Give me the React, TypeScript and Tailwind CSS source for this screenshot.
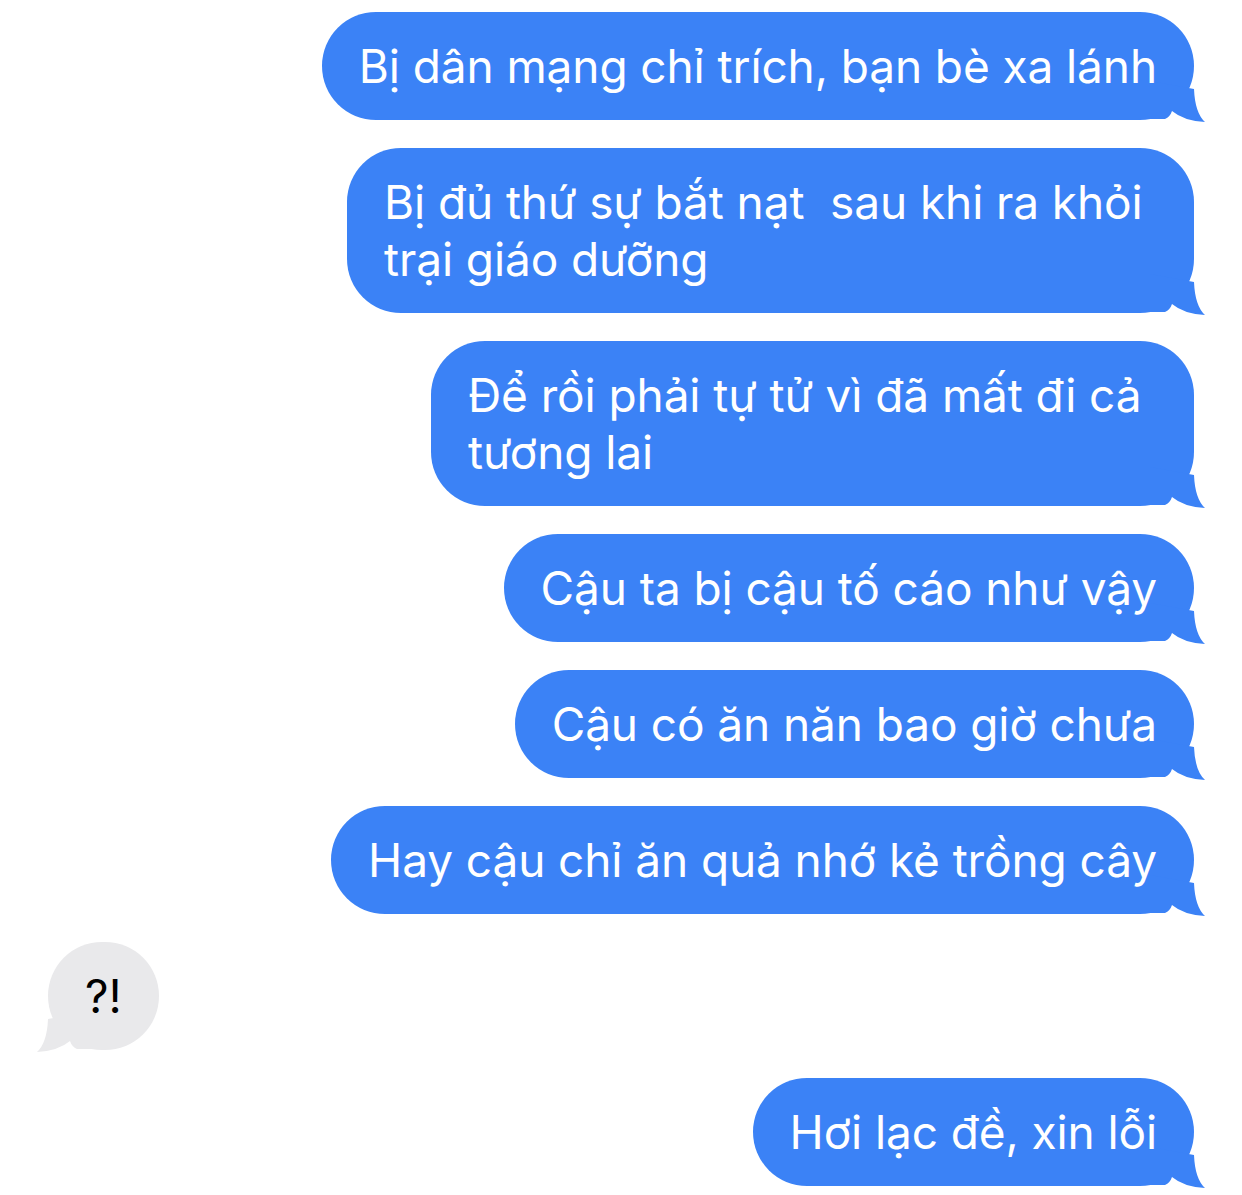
import React from "react";

type Message = {
  from: "me" | "them";
  lines: string[];
  width?: string;
};

const messages: Message[] = [
  { from: "me", lines: ["Bị dân mạng chỉ trích, bạn bè xa lánh"] },
  {
    from: "me",
    lines: ["Bị đủ thứ sự bắt nạt  sau khi ra khỏi", "trại giáo dưỡng"],
    width: "w-[847px]",
  },
  {
    from: "me",
    lines: ["Để rồi phải tự tử vì đã mất đi cả", "tương lai"],
    width: "w-[763px]",
  },
  { from: "me", lines: ["Cậu ta bị cậu tố cáo như vậy"] },
  { from: "me", lines: ["Cậu có ăn năn bao giờ chưa"] },
  { from: "me", lines: ["Hay cậu chỉ ăn quả nhớ kẻ trồng cây"] },
  { from: "them", lines: ["?!"] },
  { from: "me", lines: ["Hơi lạc đề, xin lỗi"] },
];

function Tail({ side, color }: { side: "right" | "left"; color: string }) {
  return (
    <svg
      width="56"
      height="44"
      viewBox="0 0 56 44"
      className={
        side === "right"
          ? "absolute bottom-[-3px] right-[-12px]"
          : "absolute bottom-[-3px] left-[-12px] -scale-x-100"
      }
      aria-hidden="true"
    >
      <path
        d="M0 40 L15 40 Q20 38 22 32 Q34 42 55 43 Q45 34 44 10 L0 2 Z"
        fill={color}
      />
    </svg>
  );
}

function Bubble({ message }: { message: Message }) {
  const mine = message.from === "me";
  const color = mine ? "#3b82f6" : "#e9e9eb";

  return (
    <div className={`flex ${mine ? "justify-end" : "justify-start"}`}>
      <div
        className={`relative rounded-[54px] px-[37px] py-[25.5px] ${message.width ?? ""} ${
          mine ? "bg-[#3b82f6] text-white" : "bg-[#e9e9eb] text-black"
        }`}
      >
        <Tail side={mine ? "right" : "left"} color={color} />
        <div className="relative whitespace-pre text-[46px] leading-[57px] tracking-[-0.1px]">
          {message.lines.map((line, i) => (
            <div key={i}>{line}</div>
          ))}
        </div>
      </div>
    </div>
  );
}

export default function App() {
  return (
    <div
      className="min-h-[1195px] w-full bg-white"
      style={{ fontFamily: '"Inter", "Noto Sans", sans-serif' }}
    >
      <div className="flex flex-col gap-7 pb-3 pl-12 pr-12 pt-3">
        {messages.map((m, i) => (
          <Bubble key={i} message={m} />
        ))}
      </div>
    </div>
  );
}
